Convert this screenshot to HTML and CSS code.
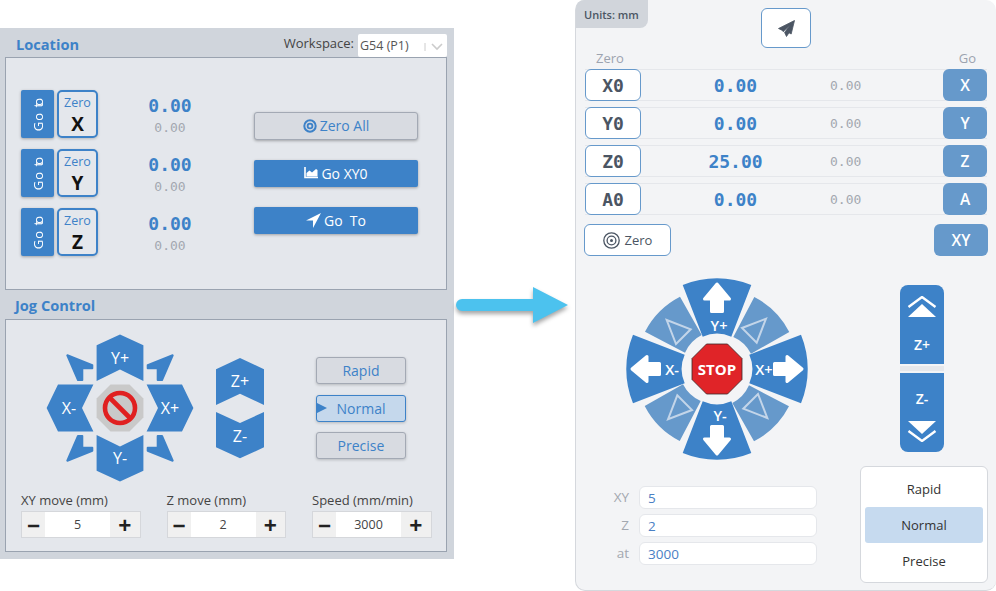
FILE: index.html
```html
<!DOCTYPE html>
<html lang="en">
<head>
    <meta charset="UTF-8">
    <title>Jog Control Redesign</title>
    <link rel="stylesheet" href="styles.css">
</head>
<body>
<div class="page">
    <!-- Old layout -->
    <div class="old-panel">
        <div class="section-head">
            <h2>Location</h2>
            <div class="workspace">
                <span>Workspace:</span>
                <div class="select">G54 (P1)
                    <span class="select-caret">
                        <svg width="22" height="10" viewBox="0 0 22 10"><path d="M1 1v8" stroke="#ccc" fill="none"/><path d="M8 2l5 5 5-5" stroke="#ccc" stroke-width="1.6" fill="none"/></svg>
                    </span>
                </div>
            </div>
        </div>
        <div class="box location-box">
            <div class="axis-list">
                <div class="axis-row">
                    <button class="goto-btn"><span>Go <i>to</i></span></button>
                    <button class="zero-btn"><small>Zero</small><b>X</b></button>
                    <div class="readout"><b>0.00</b><span>0.00</span></div>
                </div>
                <div class="axis-row">
                    <button class="goto-btn"><span>Go <i>to</i></span></button>
                    <button class="zero-btn"><small>Zero</small><b>Y</b></button>
                    <div class="readout"><b>0.00</b><span>0.00</span></div>
                </div>
                <div class="axis-row">
                    <button class="goto-btn"><span>Go <i>to</i></span></button>
                    <button class="zero-btn"><small>Zero</small><b>Z</b></button>
                    <div class="readout"><b>0.00</b><span>0.00</span></div>
                </div>
            </div>
            <div class="action-list">
                <button class="action-btn light">
                    <svg width="14" height="14" viewBox="0 0 14 14"><circle cx="7" cy="7" r="5.7" fill="none" stroke="#3d82c8" stroke-width="2"/><circle cx="7" cy="7" r="2.4" fill="none" stroke="#3d82c8" stroke-width="1.8"/></svg>
                    Zero All
                </button>
                <button class="action-btn">
                    <svg width="14" height="12" viewBox="0 0 14 12"><path d="M1 0v10.5h13" fill="none" stroke="#fff" stroke-width="1.6"/><path d="M2.5 9.5V6l3-2.5 2.5 2L12 2l1.5 1v6.5z" fill="#fff"/></svg>
                    Go XY0
                </button>
                <button class="action-btn">
                    <svg width="15" height="15" viewBox="0 0 15 15"><path d="M15 0L0 7.5h7V15z" fill="#fff"/></svg>
                    Go&nbsp;&nbsp;To
                </button>
            </div>
        </div>
        <div class="section-head jog-head">
            <h2>Jog Control</h2>
        </div>
        <div class="box jog-box">
            <div class="jog-top">
                <svg class="old-pad" width="150" height="150" viewBox="-75 -75 150 150">
                    <g fill="#3d82c8">
                        <polygon points="-23.4,-62.7 0,-73.4 23.4,-62.7 23.4,-27 0,-38.4 -23.4,-27"/>
                        <polygon points="-23.4,62.7 0,73.4 23.4,62.7 23.4,27 0,38.4 -23.4,27"/>
                        <polygon points="-73.4,0 -62,-23.4 -26.6,-23.4 -38,0 -26.6,23.4 -62,23.4"/>
                        <polygon points="73.4,0 62,-23.4 26.6,-23.4 38,0 26.6,23.4 62,23.4"/>
                    </g>
                    <g fill="#3d82c8" stroke="#3d82c8" stroke-width="2" stroke-linejoin="round">
                        <polygon points="-52.7,-52.7 -27.7,-42.7 -27.7,-39.7 -37.7,-39.7 -37.7,-28 -42,-28"/>
                        <polygon points="52.7,-52.7 27.7,-42.7 27.7,-39.7 37.7,-39.7 37.7,-28 42,-28"/>
                        <polygon points="-52.7,52.7 -27.7,42.7 -27.7,39.7 -37.7,39.7 -37.7,28 -42,28"/>
                        <polygon points="52.7,52.7 27.7,42.7 27.7,39.7 37.7,39.7 37.7,28 42,28"/>
                    </g>
                    <polygon points="-9.5,-23.4 9.5,-23.4 23.4,-9.5 23.4,9.5 9.5,23.4 -9.5,23.4 -23.4,9.5 -23.4,-9.5" fill="#c9c9c9"/>
                    <circle r="15" fill="none" stroke="#e02020" stroke-width="4.6"/>
                    <path d="M-10.5-10.5L10.5 10.5" stroke="#e02020" stroke-width="4.6"/>
                    <g class="pad-text">
                        <text x="0" y="-44.5">Y+</text>
                        <text x="0" y="55.5">Y-</text>
                        <text x="-51" y="6">X-</text>
                        <text x="50" y="6">X+</text>
                    </g>
                </svg>
                <svg class="old-z" width="48" height="102" viewBox="-24 -51 48 102">
                    <g fill="#3d82c8">
                        <polygon points="-24,-38.7 0,-50 24,-38.7 24,-3 0,-14.3 -24,-3"/>
                        <polygon points="-24,39.3 0,50.3 24,39.3 24,4 0,15 -24,4"/>
                    </g>
                    <g class="pad-text">
                        <text x="0" y="-21">Z+</text>
                        <text x="0" y="34">Z-</text>
                    </g>
                </svg>
                <div class="rate-list">
                    <button class="rate-btn">Rapid</button>
                    <button class="rate-btn active">Normal</button>
                    <button class="rate-btn">Precise</button>
                </div>
            </div>
            <div class="stepper-row">
                <div class="stepper-group">
                    <label>XY move (mm)</label>
                    <div class="stepper"><span class="minus">&minus;</span><span class="val">5</span><span class="plus">+</span></div>
                </div>
                <div class="stepper-group">
                    <label>Z move (mm)</label>
                    <div class="stepper"><span class="minus">&minus;</span><span class="val">2</span><span class="plus">+</span></div>
                </div>
                <div class="stepper-group">
                    <label>Speed (mm/min)</label>
                    <div class="stepper"><span class="minus">&minus;</span><span class="val">3000</span><span class="plus">+</span></div>
                </div>
            </div>
        </div>
    </div>

    <!-- Arrow between the two -->
    <div class="arrow-col">
        <svg width="121" height="60" viewBox="0 0 121 60">
            <path d="M8 24h71V12l35 18-35 18V36H8a6 6 0 0 1 0-12z" fill="#4cc2ee"/>
        </svg>
    </div>

    <!-- New layout -->
    <div class="new-panel">
        <div class="units-tab">Units: mm</div>
        <div class="send-row">
            <button class="send-btn">
                <svg width="17" height="17" viewBox="0 0 17 17"><path d="M16.5.5L.5 8.5l4.8 2.4-.3.9L12 5 6.6 12.4 8.5 16.5 11 12.8l2.2 1.2z" fill="#4b5563" stroke="#4b5563" stroke-width=".8" stroke-linejoin="round"/></svg>
            </button>
        </div>
        <div class="col-labels"><span>Zero</span><span>Go</span></div>
        <div class="pos-list">
            <div class="pos-row"><button class="pos-zero">X0</button><b>0.00</b><span>0.00</span><button class="pos-go">X</button></div>
            <div class="pos-row"><button class="pos-zero">Y0</button><b>0.00</b><span>0.00</span><button class="pos-go">Y</button></div>
            <div class="pos-row"><button class="pos-zero">Z0</button><b>25.00</b><span>0.00</span><button class="pos-go">Z</button></div>
            <div class="pos-row"><button class="pos-zero">A0</button><b>0.00</b><span>0.00</span><button class="pos-go">A</button></div>
        </div>
        <div class="pos-actions">
            <button class="zero-all">
                <svg width="17" height="17" viewBox="0 0 17 17" fill="none" stroke="#4b5563"><circle cx="8.5" cy="8.5" r="7.7" stroke-width="1.3"/><circle cx="8.5" cy="8.5" r="4.4" stroke-width="1.3"/><circle cx="8.5" cy="8.5" r="1.5" fill="#4b5563" stroke="none"/></svg>
                Zero
            </button>
            <button class="go-xy">XY</button>
        </div>
        <div class="lower">
            <div class="lower-left">
                <svg class="dial" width="186" height="186" viewBox="-93 -93 186 186">
                    <defs>
                        <path id="wedge" d="M-34.3-84A90.7 90.7 0 0 1 34.3-84L14.3-32.3A35.3 35.3 0 0 0-14.3-32.3Z" fill="#3d82c8"/>
                        <path id="diag" d="M-37-72.3A81 81 0 0 0-72-37.3L-32-16.3A36 36 0 0 1-15.3-34Z" fill="#6699cb"/>
                        <polygon id="tri" points="-50.3,-49 -26.3,-39.7 -41,-25" fill="none" stroke="#c3d5e9" stroke-width="2"/>
                        <polygon id="arw" points="0,-85 12.5,-70 5.5,-70 5.5,-57.5 -5.5,-57.5 -5.5,-70 -12.5,-70" fill="#fff" stroke="#fff" stroke-width="3" stroke-linejoin="round"/>
                    </defs>
                    <use href="#wedge"/>
                    <use href="#wedge" transform="rotate(90)"/>
                    <use href="#wedge" transform="rotate(180)"/>
                    <use href="#wedge" transform="rotate(270)"/>
                    <use href="#diag"/>
                    <use href="#diag" transform="rotate(90)"/>
                    <use href="#diag" transform="rotate(180)"/>
                    <use href="#diag" transform="rotate(270)"/>
                    <use href="#tri"/>
                    <use href="#tri" transform="rotate(90)"/>
                    <use href="#tri" transform="rotate(180)"/>
                    <use href="#tri" transform="rotate(270)"/>
                    <use href="#arw"/>
                    <use href="#arw" transform="rotate(90)"/>
                    <use href="#arw" transform="rotate(180)"/>
                    <use href="#arw" transform="rotate(270)"/>
                    <polygon points="-10.5,-25 10.5,-25 25,-10.5 25,10.5 10.5,25 -10.5,25 -25,10.5 -25,-10.5" fill="#e02428" stroke="#3a2a2a" stroke-width="0.8"/>
                    <g class="dial-text">
                        <text x="2" y="-38">Y+</text>
                        <text x="3" y="52">Y-</text>
                        <text x="-45" y="6">X-</text>
                        <text x="47" y="6">X+</text>
                    </g>
                    <text class="stop-text" x="0" y="5.5">STOP</text>
                </svg>
                <div class="field-list">
                    <div class="field"><label>XY</label><input type="text" value="5"></div>
                    <div class="field"><label>Z</label><input type="text" value="2"></div>
                    <div class="field"><label>at</label><input type="text" value="3000"></div>
                </div>
            </div>
            <div class="lower-right">
                <div class="z-stack">
                    <button class="z-btn up">
                        <svg width="30" height="22" viewBox="0 0 30 22"><path d="M1.5 11L15 1l13.5 10" fill="none" stroke="#fff" stroke-width="2.4"/><path d="M1 21L15 8l14 13z" fill="#fff"/></svg>
                        <span>Z+</span>
                    </button>
                    <div class="z-gap"></div>
                    <button class="z-btn down">
                        <span>Z-</span>
                        <svg width="30" height="22" viewBox="0 0 30 22"><path d="M1.5 11L15 21l13.5-10" fill="none" stroke="#fff" stroke-width="2.4"/><path d="M1 1l14 13L29 1z" fill="#fff"/></svg>
                    </button>
                </div>
                <div class="mode-box">
                    <div class="mode">Rapid</div>
                    <div class="mode selected">Normal</div>
                    <div class="mode">Precise</div>
                </div>
            </div>
        </div>
    </div>
</div>
</body>
</html>
```

FILE: styles.css
```css
/* General Styles */
* {
    box-sizing: border-box;
}
body {
    margin: 0;
    background: #fff;
    font-family: 'Open Sans', sans-serif;
    color: #444;
    overflow: hidden;
}
button {
    font-family: inherit;
    cursor: pointer;
    padding: 0;
}
.page {
    display: flex;
    align-items: flex-start;
    width: 996px;
    height: 591px;
}

/* Old panel */
.old-panel {
    width: 454px;
    height: 531px;
    margin-top: 28px;
    padding: 0 7px 0 5px;
    background: #d0d5dc;
}
.section-head {
    display: flex;
    justify-content: space-between;
    align-items: flex-start;
    height: 29px;
    padding-left: 11px;
}
.section-head h2 {
    margin: 7px 0 0;
    font-size: 14.6px;
    font-weight: 700;
    line-height: 18px;
    color: #3d82c8;
}
.jog-head {
    padding-left: 10px;
}
.jog-head h2 {
    margin-top: 6px;
}
.workspace {
    display: flex;
    gap: 4px;
    font-size: 13px;
    line-height: 16px;
    margin-top: 6px;
    color: #444;
}
.workspace > span {
    margin-top: 1px;
}
.select {
    position: relative;
    width: 89px;
    height: 23px;
    background: #fff;
    font-size: 12.5px;
    line-height: 24px;
    padding-left: 2px;
    border-radius: 2px;
    color: #555;
}
.select-caret {
    position: absolute;
    right: 1px;
    top: 2px;
}
.box {
    border: 1px solid #9aa3b0;
    background: #e4e7ec;
}

/* Location */
.location-box {
    display: flex;
    align-items: center;
    justify-content: space-between;
    height: 233px;
    padding: 0 28px 2px 15px;
}
.axis-list {
    display: flex;
    flex-direction: column;
    gap: 11px;
}
.axis-row {
    display: flex;
    align-items: center;
    gap: 3px;
    height: 48px;
}
.goto-btn {
    display: flex;
    align-items: center;
    justify-content: center;
    width: 33px;
    height: 48px;
    border: none;
    border-radius: 2px;
    background: #3d82c8;
    color: #fff;
    box-shadow: 0 1px 3px rgba(0, 0, 0, 0.3);
}
.goto-btn span {
    writing-mode: vertical-rl;
    transform: rotate(180deg);
    font-size: 13px;
    letter-spacing: 1px;
    padding-bottom: 5px;
}
.goto-btn i {
    font-style: normal;
    letter-spacing: -3px;
}
.zero-btn {
    display: flex;
    flex-direction: column;
    align-items: center;
    width: 41px;
    height: 48px;
    background: #e4e7ec;
    border: 2px solid #3d82c8;
    border-radius: 5px;
    box-shadow: 0 1px 3px rgba(0, 0, 0, 0.2);
}
.zero-btn small {
    font-size: 12.5px;
    line-height: 16px;
    margin-top: 3px;
    color: #3d82c8;
}
.zero-btn b {
    font-size: 19px;
    line-height: 26px;
    color: #111;
}
.readout {
    display: flex;
    flex-direction: column;
    align-items: center;
    width: 44px;
    margin-left: 47px;
    font-family: 'DejaVu Sans Mono', monospace;
}
.readout b {
    font-size: 18px;
    line-height: 24px;
    margin-top: 5px;
    color: #3d82c8;
}
.readout span {
    font-size: 13px;
    line-height: 20px;
    color: #a3a8b0;
}
.action-list {
    display: flex;
    flex-direction: column;
    gap: 20px;
    width: 164px;
}
.action-btn {
    display: flex;
    align-items: center;
    justify-content: center;
    gap: 3px;
    height: 27px;
    border: none;
    border-radius: 2px;
    background: #3d82c8;
    color: #fff;
    font-size: 14px;
    box-shadow: 0 1px 3px rgba(0, 0, 0, 0.3);
}
.action-btn.light {
    height: 28px;
    background: #d8dbe1;
    border: 1px solid #a3a9b4;
    color: #3d82c8;
    border-radius: 3px;
}

/* Jog */
.jog-box {
    height: 233px;
}
.jog-top {
    display: flex;
    align-items: center;
    padding: 13px 0 0 39px;
}
.old-z {
    margin-left: 21px;
}
.pad-text text {
    fill: #fff;
    font-size: 16px;
    text-anchor: middle;
}
.rate-list {
    display: flex;
    flex-direction: column;
    gap: 10.5px;
    width: 90px;
    margin-left: 52px;
}
.rate-btn {
    height: 27px;
    background: #d8dbe1;
    border: 1px solid #a3a9b4;
    border-radius: 3px;
    color: #3d82c8;
    font-size: 14px;
    box-shadow: 0 1px 3px rgba(0, 0, 0, 0.2);
}
.rate-btn.active {
    position: relative;
    background: #c5d8ec;
    border-color: #3d82c8;
}
.rate-btn.active::before {
    content: '';
    position: absolute;
    left: 0;
    top: 7.5px;
    border-left: 10px solid #3d82c8;
    border-top: 5px solid transparent;
    border-bottom: 5px solid transparent;
}
.stepper-row {
    display: flex;
    gap: 26px;
    padding: 9px 0 0 15px;
}
.stepper-group {
    width: 119.5px;
}
.stepper-group label {
    display: block;
    font-size: 13px;
    line-height: 17px;
    height: 19px;
    color: #444;
    white-space: nowrap;
}
.stepper {
    display: flex;
    align-items: center;
    height: 27px;
    background: #f0f0f0;
    border: 1px solid #d5d7db;
    text-align: center;
}
.minus, .plus {
    font-size: 23px;
    font-weight: 700;
    line-height: 24px;
    color: #222;
}
.minus {
    width: 23px;
}
.plus {
    flex: 1;
}
.val {
    width: 65px;
    height: 100%;
    background: #fff;
    font-size: 12.5px;
    line-height: 25px;
}

/* Arrow */
.arrow-col {
    width: 121px;
    padding-top: 275px;
}
.arrow-col svg {
    display: block;
    filter: drop-shadow(0 3px 2px rgba(0, 0, 0, 0.35));
    overflow: visible;
}

/* New panel */
.new-panel {
    position: relative;
    width: 421px;
    height: 591px;
    padding: 8px 8px 0 9px;
    background: #f3f4f6;
    border: 1px solid #d5d8dd;
    border-top: none;
    border-right: none;
    border-radius: 10px;
}
.units-tab {
    position: absolute;
    left: 0;
    top: 0;
    width: 72px;
    height: 28px;
    padding-left: 8px;
    background: #d1d5db;
    border-radius: 8px 0 8px 0;
    font-size: 11px;
    font-weight: 600;
    line-height: 30px;
    color: #4b5563;
}
.send-row {
    display: flex;
    justify-content: center;
}
.send-btn {
    display: flex;
    align-items: center;
    justify-content: center;
    width: 50px;
    height: 40px;
    margin-left: -1px;
    background: #fff;
    border: 1px solid #6699cb;
    border-radius: 6px;
}
.col-labels {
    display: flex;
    justify-content: space-between;
    padding: 0 12px 0 11px;
    height: 21px;
    font-size: 13px;
    line-height: 21px;
    color: #9ca3af;
}
.pos-list {
    display: flex;
    flex-direction: column;
    gap: 6px;
    margin-right: 1px;
}
.pos-row {
    display: flex;
    align-items: center;
    height: 32px;
    font-family: 'DejaVu Sans Mono', monospace;
    background: linear-gradient(#e5e7eb, #e5e7eb) top / 100% 1px no-repeat, linear-gradient(#e5e7eb, #e5e7eb) bottom / 100% 1px no-repeat;
}
.pos-row b {
    width: 189px;
    font-size: 18px;
    color: #3d82c8;
    text-align: center;
}
.pos-row span {
    width: 30px;
    font-size: 13px;
    color: #a3a8b0;
    text-align: center;
}
.pos-zero {
    width: 56px;
    height: 32px;
    background: #fff;
    border: 1px solid #6699cb;
    border-radius: 6px;
    font-family: 'DejaVu Sans Mono', monospace;
    font-size: 18px;
    font-weight: 700;
    color: #4b5563;
}
.pos-go {
    width: 44px;
    height: 32px;
    margin-left: auto;
    background: #6699cb;
    border: none;
    border-radius: 6px;
    font-family: 'Open Sans', sans-serif;
    font-size: 15.5px;
    font-weight: 600;
    color: #fff;
}
.pos-actions {
    display: flex;
    justify-content: space-between;
    margin: 9px 0 0 -1px;
}
.zero-all {
    display: flex;
    align-items: center;
    justify-content: center;
    gap: 5px;
    width: 87px;
    height: 32px;
    background: #fff;
    border: 1px solid #6699cb;
    border-radius: 6px;
    font-size: 13px;
    font-weight: 500;
    color: #4b5563;
}
.go-xy {
    width: 54px;
    height: 32px;
    background: #6699cb;
    border: none;
    border-radius: 6px;
    font-size: 15.5px;
    font-weight: 600;
    color: #fff;
}

/* Dial and fields */
.lower {
    display: flex;
    justify-content: space-between;
}
.lower-left {
    width: 275px;
}
.dial {
    display: block;
    margin: 20px 0 0 39px;
}
.dial-text text {
    fill: #fff;
    font-size: 14.5px;
    font-weight: 600;
    text-anchor: middle;
}
.stop-text {
    fill: #fff;
    font-size: 15px;
    font-weight: 700;
    text-anchor: middle;
}
.field-list {
    display: flex;
    flex-direction: column;
    gap: 5.5px;
    margin-top: 24px;
}
.field {
    display: flex;
    align-items: center;
    gap: 10px;
}
.field label {
    width: 44px;
    text-align: right;
    font-size: 13.5px;
    color: #a3a8b0;
}
.field input {
    width: 178px;
    height: 22.5px;
    padding: 1px 8px 0;
    background: #fff;
    border: 1px solid #e5e7eb;
    border-radius: 6px;
    font-family: inherit;
    font-size: 13.5px;
    color: #4a80c4;
}
.lower-right {
    display: flex;
    flex-direction: column;
    align-items: flex-end;
    width: 128px;
}
.z-stack {
    display: flex;
    flex-direction: column;
    align-items: center;
    width: 44px;
    margin: 29px 44px 0 0;
}
.z-btn {
    display: flex;
    flex-direction: column;
    align-items: center;
    width: 44px;
    height: 79px;
    background: #3d82c8;
    border: none;
    color: #fff;
    font-size: 14px;
    font-weight: 600;
    line-height: 19px;
}
.z-btn.up {
    gap: 17px;
    padding-top: 11px;
    border-radius: 8px 8px 0 0;
}
.z-btn.down {
    gap: 12px;
    padding-top: 16px;
    border-radius: 0 0 8px 8px;
}
.z-gap {
    width: 44px;
    height: 9px;
    background: linear-gradient(#f3f4f6 2px, #e5e7eb 2px, #e5e7eb 7px, #f3f4f6 7px);
}
.mode-box {
    width: 128px;
    height: 117px;
    margin-top: 14px;
    padding: 4px;
    background: #fff;
    border: 1px solid #d5d8dd;
    border-radius: 6px;
}
.mode {
    height: 36px;
    font-size: 13px;
    line-height: 36px;
    text-align: center;
    color: #333;
}
.mode.selected {
    background: #c6daef;
    border-radius: 3px;
}
```
